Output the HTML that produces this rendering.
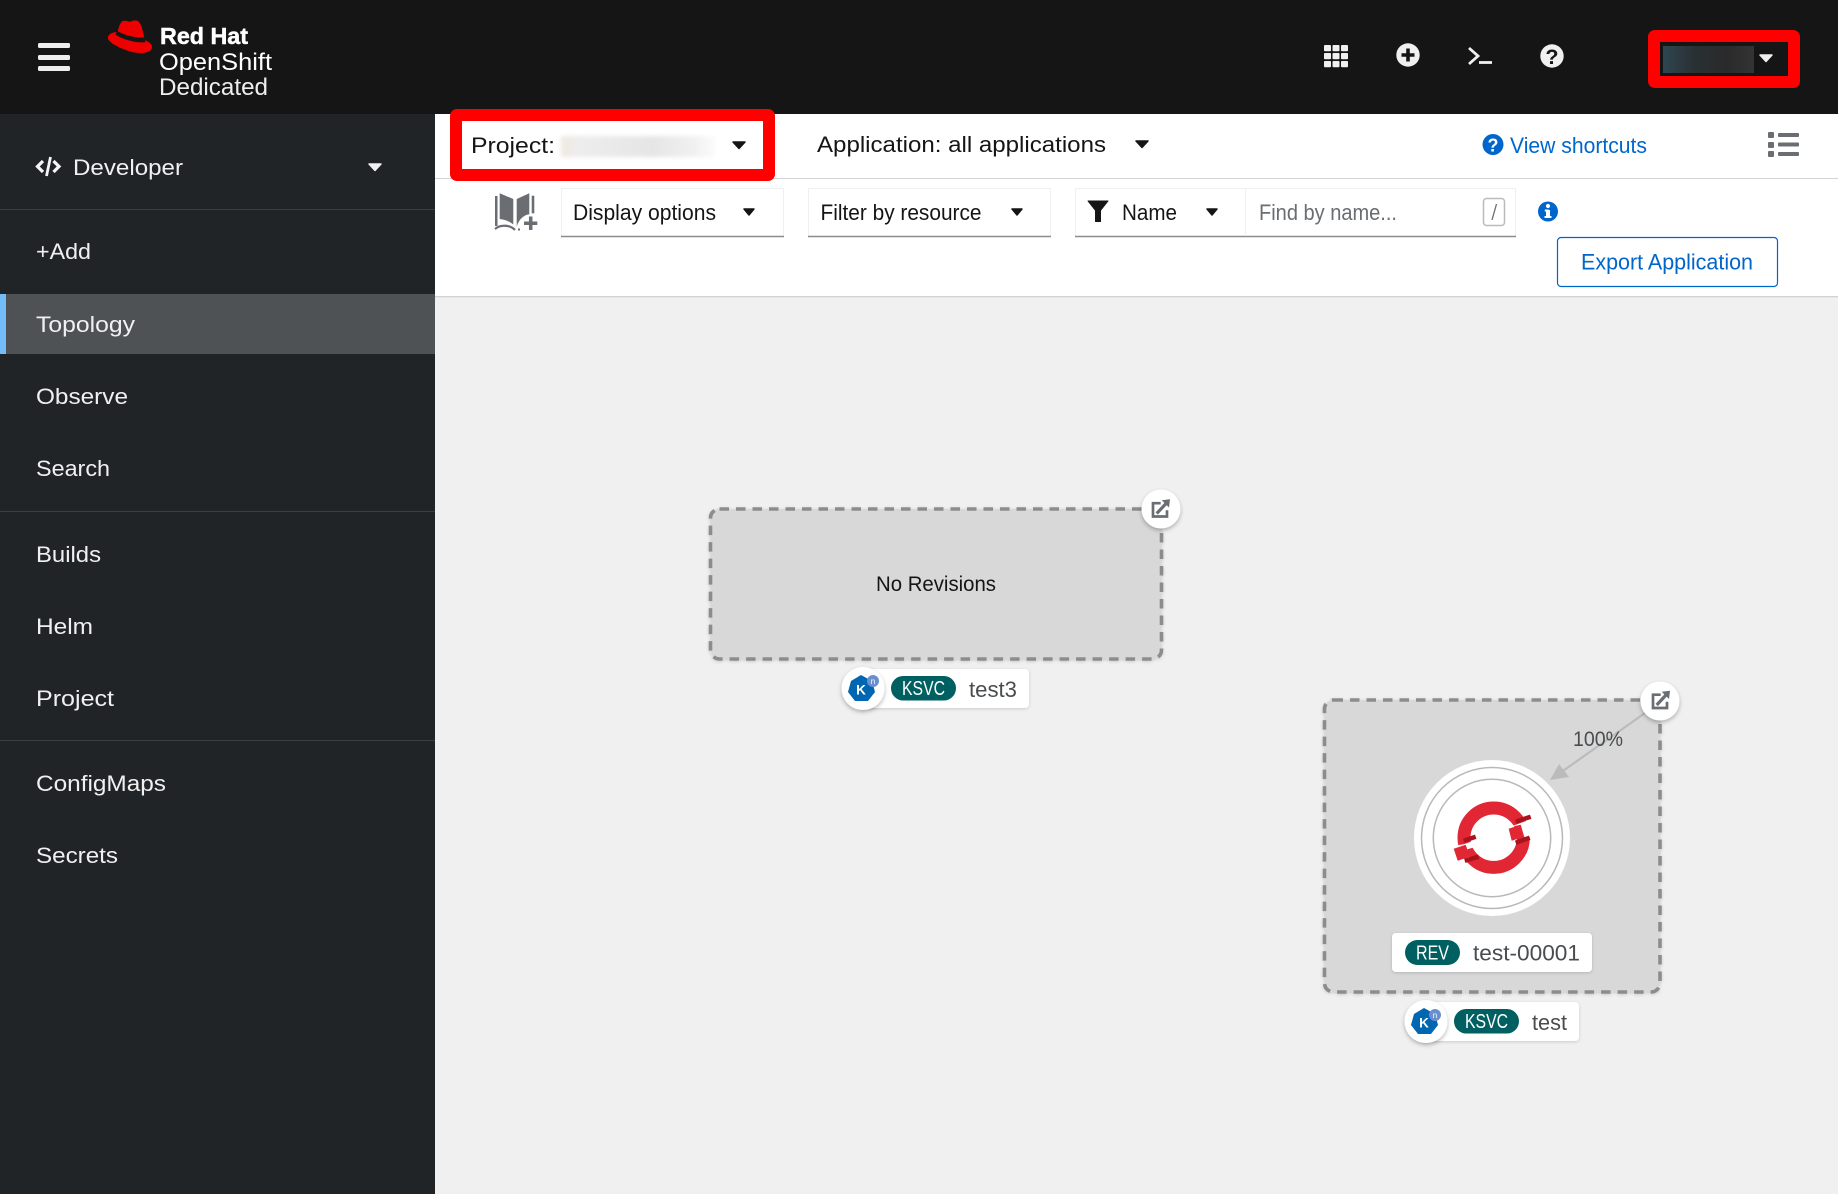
<!DOCTYPE html>
<html lang="en"><head><meta charset="utf-8"><title>Topology</title>
<style>
html,body{margin:0;padding:0;background:#f0f0f0}
svg{display:block}
text{font-family:"Liberation Sans",sans-serif;white-space:pre}
.nav{font-size:22.4px;fill:#f0f0f0}
.dk{font-size:22.4px;fill:#151515}
.bl{font-size:22.4px;fill:#06c}
.lb{font-size:22.4px;fill:#4a4d50}
.bd{font-size:20.5px;fill:#fff}
</style></head><body>
<svg width="1838" height="1194" viewBox="0 0 1838 1194" xmlns="http://www.w3.org/2000/svg">
<defs>
<filter id="b5" x="-20%" y="-50%" width="140%" height="200%"><feGaussianBlur stdDeviation="2"/></filter>
<filter id="sh" x="-30%" y="-30%" width="160%" height="170%"><feDropShadow dx="0" dy="2" stdDeviation="2" flood-color="#000" flood-opacity=".28"/></filter>
<filter id="sl" x="-10%" y="-20%" width="120%" height="150%"><feDropShadow dx="0" dy="1" stdDeviation="1.5" flood-color="#000" flood-opacity=".16"/></filter>
<linearGradient id="g1"><stop offset="0" stop-color="#efe8df"/><stop offset=".1" stop-color="#ededed"/><stop offset=".6" stop-color="#e5e5e5"/><stop offset=".85" stop-color="#f0f0f0"/><stop offset="1" stop-color="#fbfbfb"/></linearGradient>
<linearGradient id="g2"><stop offset="0" stop-color="#2f4650"/><stop offset=".35" stop-color="#293033"/><stop offset=".7" stop-color="#2a2a2a"/><stop offset="1" stop-color="#333"/></linearGradient>
</defs>

<rect width="1838" height="1194" fill="#f0f0f0"/>
<!-- masthead -->
<rect width="1838" height="114" fill="#151515"/>
<g fill="#eee"><rect x="38" y="43" width="32" height="5" rx="1.5"/><rect x="38" y="55" width="32" height="5" rx="1.5"/><rect x="38" y="66" width="32" height="5" rx="1.5"/></g>
<!-- hat -->
<path d="M117.500 32C119 27 120 22 123 21C126 20 128 22 131 21.500C134 20 137 20 139 22C142 25 143 33 145 40C149 42 152 44 152 47C152 51 148 53 140 53C131 53 120 48 113 44C109 41 107.500 39 108 37C108.500 34 113 32 117.500 32Z" fill="#e00"/>
<path d="M117.300 30.700C122 34 133 38 144.500 37.500L145.500 42.300C134 43 122 39 115.500 34.500Z" fill="#151515"/>
<text x="160" y="44" font-size="23.500" font-weight="700" fill="#fff" stroke="#fff" stroke-width=".5" textLength="88" lengthAdjust="spacingAndGlyphs">Red Hat</text>
<text x="159" y="70" font-size="24" fill="#fff" textLength="113" lengthAdjust="spacingAndGlyphs">OpenShift</text>
<text x="159" y="95" font-size="24" fill="#eee" textLength="109" lengthAdjust="spacingAndGlyphs">Dedicated</text>

<!-- masthead icons -->
<g fill="#f0f0f0">
<rect x="1324" y="45" width="7" height="6.300" rx="1"/><rect x="1332.500" y="45" width="7" height="6.300" rx="1"/><rect x="1341" y="45" width="7" height="6.300" rx="1"/>
<rect x="1324" y="53" width="7" height="6.300" rx="1"/><rect x="1332.500" y="53" width="7" height="6.300" rx="1"/><rect x="1341" y="53" width="7" height="6.300" rx="1"/>
<rect x="1324" y="61" width="7" height="6.300" rx="1"/><rect x="1332.500" y="61" width="7" height="6.300" rx="1"/><rect x="1341" y="61" width="7" height="6.300" rx="1"/>
<circle cx="1408" cy="55" r="11.700"/><circle cx="1552" cy="56" r="11.700"/>
</g>
<path d="M1401.500 55h13M1408 48.500v13" stroke="#151515" stroke-width="3.600"/>
<path d="M1469 48l9 8-9 8" fill="none" stroke="#f0f0f0" stroke-width="2.800"/><path d="M1479 62.500h13" stroke="#f0f0f0" stroke-width="2.800"/>
<text x="1552" y="64" font-size="21.500" font-weight="700" fill="#151515" text-anchor="middle">?</text>

<!-- user box -->
<rect x="1654" y="36" width="140" height="46" rx="1" fill="none" stroke="#f00" stroke-width="12" stroke-linejoin="round"/>
<rect x="1663" y="46" width="91" height="27" fill="url(#g2)"/>
<polygon points="1760,55 1772,55 1766,61.500" fill="#f0f0f0" stroke="#f0f0f0" stroke-width="1.500" stroke-linejoin="round"/>

<!-- sidebar -->
<rect y="114" width="435" height="1080" fill="#212427"/>
<path d="M43 161l-5.500 5.500 5.500 5.500M53.500 161l5.500 5.500-5.500 5.500" fill="none" stroke="#f5f5f5" stroke-width="3.200"/><path d="M50.500 157l-4 19" stroke="#f5f5f5" stroke-width="2.800"/>
<text class="nav" x="73" y="175" textLength="110" lengthAdjust="spacingAndGlyphs">Developer</text>
<polygon points="369,164 381,164 375,170.500" fill="#f0f0f0" stroke="#f0f0f0" stroke-width="1.500" stroke-linejoin="round"/>
<rect y="209" width="435" height="1" fill="#3c3f42"/>
<text class="nav" x="36" y="259" textLength="55" lengthAdjust="spacingAndGlyphs">+Add</text>
<rect y="294" width="435" height="60" fill="#4f5255"/><rect y="294" width="6" height="60" fill="#73bcf7"/>
<text class="nav" x="36" y="332" textLength="99" lengthAdjust="spacingAndGlyphs">Topology</text>
<text class="nav" x="36" y="404" textLength="92" lengthAdjust="spacingAndGlyphs">Observe</text>
<text class="nav" x="36" y="476" textLength="74" lengthAdjust="spacingAndGlyphs">Search</text>
<rect y="511" width="435" height="1" fill="#3c3f42"/>
<text class="nav" x="36" y="562" textLength="65" lengthAdjust="spacingAndGlyphs">Builds</text>
<text class="nav" x="36" y="634" textLength="57" lengthAdjust="spacingAndGlyphs">Helm</text>
<text class="nav" x="36" y="706" textLength="78" lengthAdjust="spacingAndGlyphs">Project</text>
<rect y="740" width="435" height="1" fill="#3c3f42"/>
<text class="nav" x="36" y="791" textLength="130" lengthAdjust="spacingAndGlyphs">ConfigMaps</text>
<text class="nav" x="36" y="863" textLength="82" lengthAdjust="spacingAndGlyphs">Secrets</text>

<!-- top bars -->
<rect x="435" y="114" width="1403" height="184" fill="#fff"/>
<rect x="435" y="178" width="1403" height="1" fill="#d2d2d2"/>
<rect x="435" y="296" width="1403" height="1.500" fill="#d2d2d2"/>

<rect x="456" y="115" width="313" height="60" rx="1" fill="none" stroke="#f00" stroke-width="12" stroke-linejoin="round"/>
<text class="dk" x="471" y="153" textLength="84" lengthAdjust="spacingAndGlyphs">Project:</text>
<rect x="561" y="136" width="154" height="21" fill="url(#g1)" filter="url(#b5)"/>
<polygon points="733,142 745,142 739,148.500" fill="#151515" stroke="#151515" stroke-width="1.500" stroke-linejoin="round"/>
<text class="dk" x="817" y="152" textLength="289" lengthAdjust="spacingAndGlyphs">Application: all applications</text>
<polygon points="1136,141 1148,141 1142,147.500" fill="#151515" stroke="#151515" stroke-width="1.500" stroke-linejoin="round"/>

<circle cx="1493" cy="144.500" r="10.500" fill="#06c"/>
<text x="1493" y="151.500" font-size="18" font-weight="700" fill="#fff" text-anchor="middle">?</text>
<text class="bl" x="1510" y="153" textLength="137" lengthAdjust="spacingAndGlyphs">View shortcuts</text>
<g fill="#6a6e73"><rect x="1768" y="132" width="6" height="6" rx="1"/><rect x="1768" y="142" width="6" height="6" rx="1"/><rect x="1768" y="151" width="6" height="6" rx="1"/><rect x="1778" y="133" width="21" height="4" rx="1"/><rect x="1778" y="142.500" width="21" height="4" rx="1"/><rect x="1778" y="152" width="21" height="4" rx="1"/></g>

<!-- book icon -->
<g fill="#6a6e73">
<path d="M495 196h2.500v30h-2.500z"/>
<path d="M499.700 193.300L513.300 199V224.500C509 221 504 219.500 499.700 219Z"/>
<path d="M516.700 199L529.300 193.300V214.300C524 215 519 219 516.700 226.700Z"/>
<path d="M531.700 195.700H534.300V213.300H531.700Z"/>
</g>
<path d="M495 229C500 224.500 510 224.500 515 230" fill="none" stroke="#6a6e73" stroke-width="2.200"/>
<path d="M518 229.500h2" stroke="#6a6e73" stroke-width="2"/>
<path d="M530.700 216.500V230M524 223.300H537.300" stroke="#6a6e73" stroke-width="3.500"/>

<!-- display options -->
<g fill="none"><path d="M561.500 237V188.500H783.500V237M808.500 237V188.500H1050.500V237M1075.500 237V188.500H1515.500V237" stroke="#f0f0f0" stroke-width="1"/>
<path d="M561 236.500H784M808 236.500H1051M1075 236.500H1516" stroke="#8a8d90" stroke-width="1.500"/><path d="M1245.500 189V236" stroke="#f0f0f0"/></g>
<text class="dk" x="573" y="220" font-size="21" textLength="143" lengthAdjust="spacingAndGlyphs">Display options</text>
<polygon points="744,209 754,209 749,215" fill="#151515" stroke="#151515" stroke-width="1.500" stroke-linejoin="round"/>
<text class="dk" x="820.500" y="220" textLength="161" lengthAdjust="spacingAndGlyphs">Filter by resource</text>
<polygon points="1012,209 1022,209 1017,215" fill="#151515" stroke="#151515" stroke-width="1.500" stroke-linejoin="round"/>
<path d="M1088 201h20l-7.500 9.500v11l-5 0v-11z" fill="#151515" stroke="#151515" stroke-linejoin="round"/>
<text class="dk" x="1122" y="220" textLength="55" lengthAdjust="spacingAndGlyphs">Name</text>
<polygon points="1207,209 1217,209 1212,215" fill="#151515" stroke="#151515" stroke-width="1.500" stroke-linejoin="round"/>
<text x="1259" y="220" font-size="22.400" fill="#6a6e73" textLength="138" lengthAdjust="spacingAndGlyphs">Find by name...</text>
<rect x="1483.500" y="198.500" width="21" height="27" rx="3" fill="#fff" stroke="#bbb" stroke-width="1.500"/>
<path d="M1496.500 204l-4.500 16" stroke="#6a6e73" stroke-width="1.300"/>
<circle cx="1548" cy="211.500" r="10" fill="#06c"/>
<rect x="1546" y="210" width="4" height="7.500" fill="#fff"/><rect x="1544.500" y="216" width="7" height="2" fill="#fff"/><rect x="1544.800" y="209.500" width="4" height="2" fill="#fff"/><circle cx="1548" cy="206" r="2.100" fill="#fff"/>
<rect x="1557.500" y="237.500" width="220" height="49" rx="3.500" fill="#fff" stroke="#06c" stroke-width="1.200"/>
<text class="bl" x="1581" y="269.500" textLength="172" lengthAdjust="spacingAndGlyphs">Export Application</text>

<!-- group 1 -->
<rect x="710.500" y="509" width="451" height="150" rx="9" fill="#d8d8d8" stroke="#8a8d90" stroke-width="3.600" stroke-dasharray="9.500 7" filter="url(#sl)"/>
<text x="876" y="591" font-size="21" fill="#151515" textLength="120" lengthAdjust="spacingAndGlyphs">No Revisions</text>
<circle cx="1161" cy="509" r="19.500" fill="#fff" filter="url(#sh)"/>
<g transform="translate(1160,508.500)"><path d="M.7-5.300H-7V8H7V1.700" fill="none" stroke="#6a6e73" stroke-width="2.700"/><path d="M-3.300 5L7-6" stroke="#6a6e73" stroke-width="3.200"/><polygon points="1.700,-8.300 10,-9.300 9,-1" fill="#6a6e73"/></g>

<rect x="860" y="669" width="169" height="39" rx="4" fill="#fff" filter="url(#sl)"/>
<circle cx="863" cy="688.500" r="21.500" fill="#fff" filter="url(#sh)"/>
<polygon points="861,675 872,681 875,692 868,701 855,701 848,692 851,681" fill="#0066b1"/>
<circle cx="873" cy="681" r="6" fill="#6a8fd0"/>
<text x="873" y="684" font-size="8" fill="#fff" text-anchor="middle">n</text>
<text x="861" y="694.500" font-size="13.500" font-weight="700" fill="#fff" text-anchor="middle">K</text>
<rect x="891" y="676" width="65" height="24.500" rx="12.250" fill="#005f60"/>
<text class="bd" x="902" y="695" textLength="43" lengthAdjust="spacingAndGlyphs">KSVC</text>
<text class="lb" x="969" y="697" textLength="48" lengthAdjust="spacingAndGlyphs">test3</text>

<!-- group 2 -->
<rect x="1324.500" y="700" width="335.500" height="292" rx="9" fill="#d8d8d8" stroke="#8a8d90" stroke-width="3.600" stroke-dasharray="9.500 7" filter="url(#sl)"/>
<path d="M1645 713L1560 773" stroke="#bbb" stroke-width="2.200"/>
<polygon points="1550,780 1559,764 1569,777" fill="#bbb"/>
<text x="1573" y="746" font-size="21.500" fill="#4a4d50" textLength="50" lengthAdjust="spacingAndGlyphs">100%</text>
<circle cx="1660" cy="701" r="19.500" fill="#fff" filter="url(#sh)"/>
<g transform="translate(1660,700)"><path d="M.7-5.300H-7V8H7V1.700" fill="none" stroke="#6a6e73" stroke-width="2.700"/><path d="M-3.300 5L7-6" stroke="#6a6e73" stroke-width="3.200"/><polygon points="1.700,-8.300 10,-9.300 9,-1" fill="#6a6e73"/></g>

<circle cx="1492" cy="838" r="78" fill="#fff"/>
<circle cx="1492" cy="838" r="70.500" fill="none" stroke="#b8b8b8" stroke-width="1.500"/>
<circle cx="1492" cy="838" r="58.700" fill="none" stroke="#b8b8b8" stroke-width="1.500"/>
<g transform="translate(1493.700,837.700)">
<circle r="29.700" fill="none" stroke="#e12634" stroke-width="13"/>
<polygon points="14,-10 40,-19.500 42,1 30,-1 27,-13" fill="#fff"/>
<polygon points="-45,13 -40,8 -30,6.500 -17,2 -14,8 -28,12" fill="#fff"/>
<polygon points="-36,23 -32,25 -24,19 -29,14" fill="#fff"/>
<polygon points="15,-9 27,-13 30.500,-1 18,3" fill="#e12634"/>
<polygon points="-40,11 -28,7 -24,19 -36,23" fill="#e12634"/>
<path d="M22-16L37-21M22 5L36 0M-30 3L-18-1M-29 23L-15 19" stroke="#a8141e" stroke-width="4.500"/>
</g>

<rect x="1392" y="933" width="200" height="39" rx="4" fill="#fff" filter="url(#sl)"/>
<rect x="1405" y="940" width="55" height="25" rx="12.500" fill="#005f60"/>
<text class="bd" x="1416" y="959.500" textLength="33" lengthAdjust="spacingAndGlyphs">REV</text>
<text class="lb" x="1473" y="960.500" textLength="107" lengthAdjust="spacingAndGlyphs">test-00001</text>

<rect x="1420" y="1002" width="159" height="39" rx="4" fill="#fff" filter="url(#sl)"/>
<circle cx="1426" cy="1021.500" r="21.500" fill="#fff" filter="url(#sh)"/>
<polygon points="1424,1008 1435,1014 1438,1025 1431,1034 1418,1034 1411,1025 1414,1014" fill="#0066b1"/>
<circle cx="1435" cy="1015" r="6" fill="#6a8fd0"/>
<text x="1435" y="1018" font-size="8" fill="#fff" text-anchor="middle">n</text>
<text x="1424" y="1027.500" font-size="13.500" font-weight="700" fill="#fff" text-anchor="middle">K</text>
<rect x="1454" y="1009" width="65" height="24.500" rx="12.250" fill="#005f60"/>
<text class="bd" x="1465" y="1028" textLength="43" lengthAdjust="spacingAndGlyphs">KSVC</text>
<text class="lb" x="1532" y="1030" textLength="35" lengthAdjust="spacingAndGlyphs">test</text>
</svg>
</body></html>
